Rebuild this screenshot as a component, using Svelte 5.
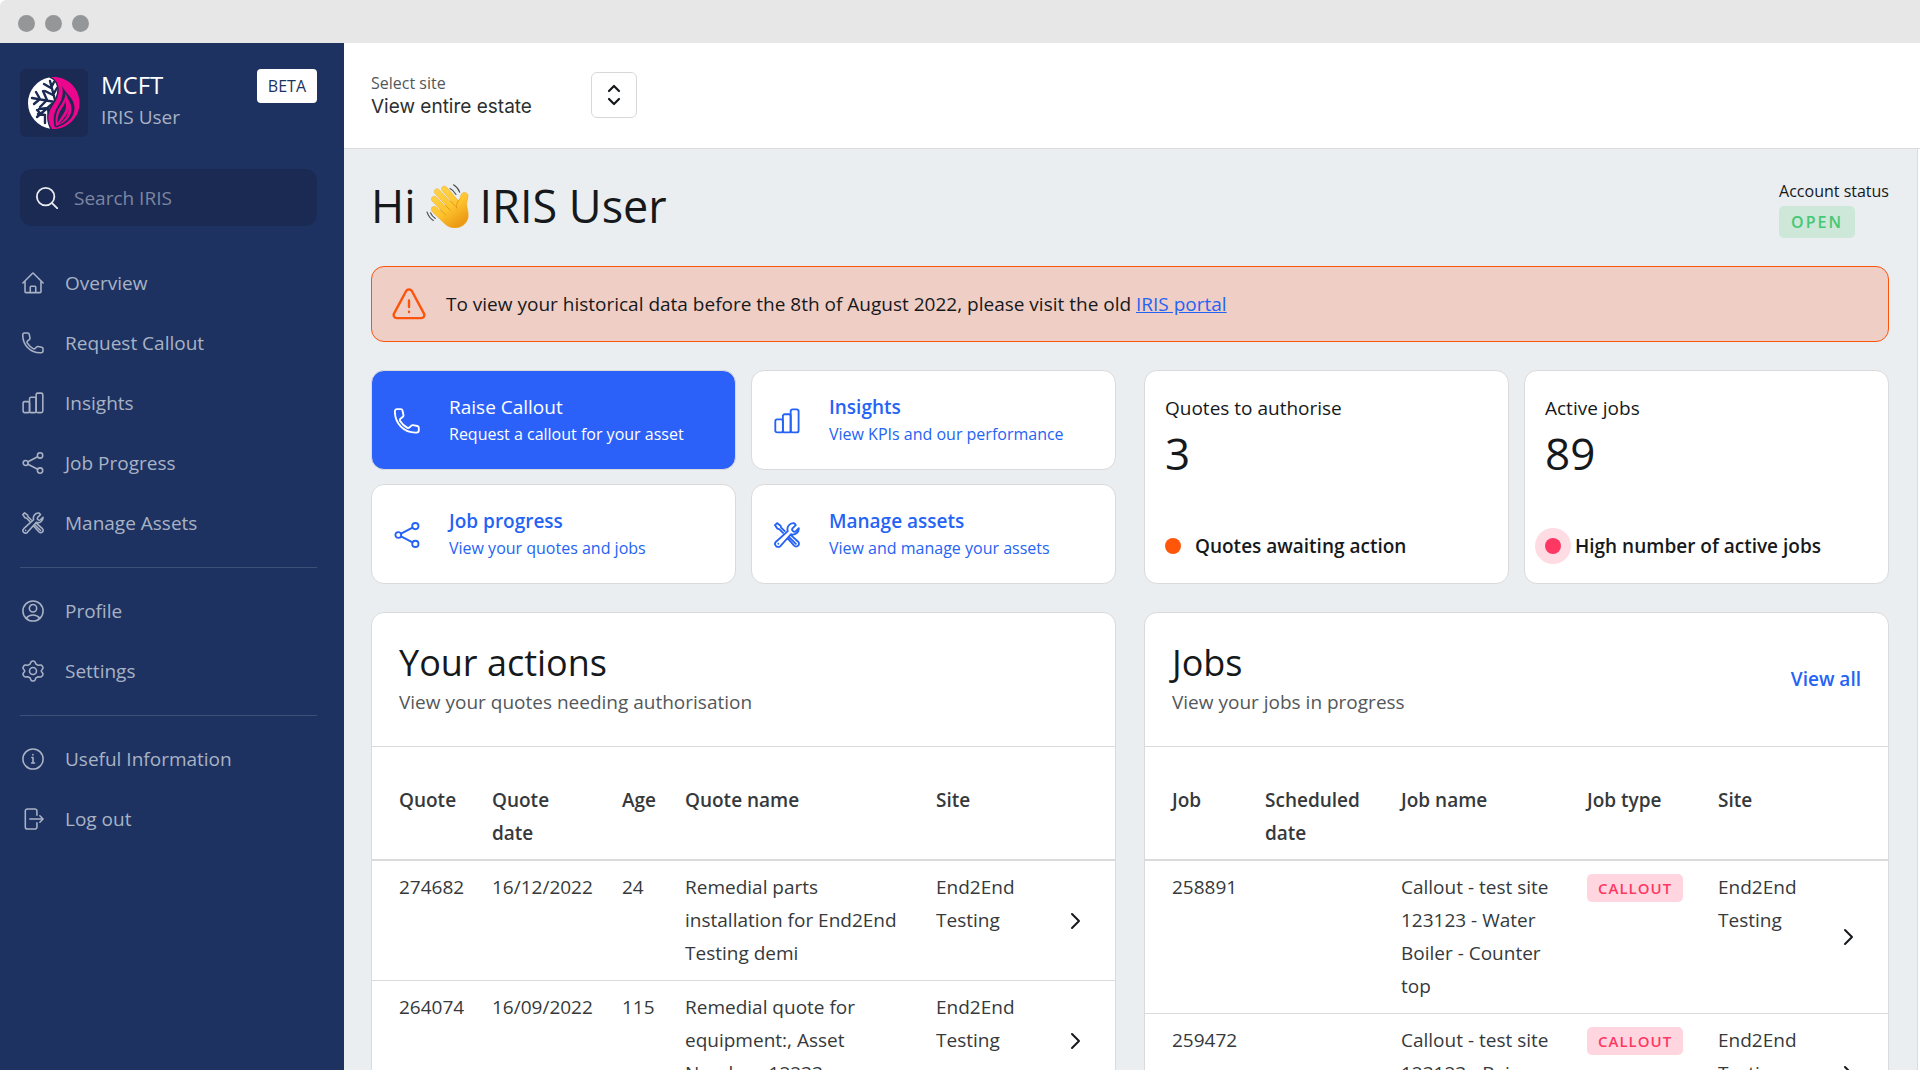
<script lang="ts">
    let search = "";

    const mainLinks = [
        { icon: "home", label: "Overview" },
        { icon: "phone", label: "Request Callout" },
        { icon: "chart", label: "Insights" },
        { icon: "share", label: "Job Progress" },
        { icon: "tools", label: "Manage Assets" }
    ];
    const userLinks = [
        { icon: "profile", label: "Profile" },
        { icon: "settings", label: "Settings" }
    ];
    const infoLinks = [
        { icon: "info", label: "Useful Information" },
        { icon: "logout", label: "Log out" }
    ];
    const navGroups = [mainLinks, userLinks, infoLinks];

    const shortcuts = [
        { icon: "phone", title: "Raise Callout", text: "Request a callout for your asset", primary: true },
        { icon: "chart", title: "Insights", text: "View KPIs and our performance", primary: false },
        { icon: "share", title: "Job progress", text: "View your quotes and jobs", primary: false },
        { icon: "tools", title: "Manage assets", text: "View and manage your assets", primary: false }
    ];

    const stats = [
        { label: "Quotes to authorise", value: 3, note: "Quotes awaiting action", level: "warn" },
        { label: "Active jobs", value: 89, note: "High number of active jobs", level: "alert" }
    ];

    const quotes = [
        { id: 274682, date: "16/12/2022", age: 24, name: "Remedial parts installation for End2End Testing demi", site: "End2End Testing" },
        { id: 264074, date: "16/09/2022", age: 115, name: "Remedial quote for equipment:, Asset Number: 12233", site: "End2End Testing" }
    ];

    const jobs = [
        { id: 258891, date: "", name: "Callout - test site 123123 - Water Boiler - Counter top", type: "Callout", site: "End2End Testing" },
        { id: 259472, date: "", name: "Callout - test site 123123 - Bain Marie", type: "Callout", site: "End2End Testing" }
    ];
</script>

{#snippet icon(name: string)}
    <svg class="icon" viewBox="0 0 24 24" aria-hidden="true">
        {#if name === "home"}
            <path d="M1 12 11.3 1.6a1 1 0 0 1 1.4 0L23 12M3.3 9.8V21.5a1 1 0 0 0 1 1h15.4a1 1 0 0 0 1-1V9.8M9 22.5v-6a1 1 0 0 1 1-1h4a1 1 0 0 1 1 1v6" />
        {:else if name === "phone"}
            <path d="M2.6 1.1h3.6a1.8 1.8 0 0 1 1.7 1.4l.8 4a1.8 1.8 0 0 1-.7 1.8L6.2 9.6a2 2 0 0 0-.4 2.6a18 18 0 0 0 6.3 5.9a2 2 0 0 0 2.5-.4l1.2-1.3a1.9 1.9 0 0 1 1.7-.6l4.1.8a1.7 1.7 0 0 1 1.3 1.7v2.2a2.2 2.2 0 0 1-2.2 2.2C9 23.2.8 14 .8 3.3a2 2 0 0 1 1.8-2.2Z" />
        {:else if name === "chart"}
            <rect x="1.2" y="10.5" width="7" height="12" rx="1.6" />
            <rect x="8.2" y="5.8" width="7.2" height="16.7" rx="1.6" />
            <rect x="15.4" y="1.2" width="7.3" height="21.3" rx="1.8" />
        {:else if name === "share"}
            <circle cx="4" cy="12" r="2.7" />
            <circle cx="19.7" cy="3.8" r="2.9" />
            <circle cx="19.7" cy="20.2" r="2.9" />
            <path d="m6.5 10.7 10.6-5.5M6.5 13.3l10.6 5.5" />
        {:else if name === "tools"}
            <path d="m9.9 8.4-3.3-3.2-.5-1.8L2.8 1 .9 2.9l2.3 3.3 1.9.6 3.2 3.3M14.4 14.4l5.8 5.8M12.6 15.2l6 6.7a2.6 2.6 0 0 0 3.7 0 2.6 2.6 0 0 0 0-3.7l-6.7-6.1M18.3 1.1a5.5 5.5 0 0 0-5.6 7.3L1.9 18.2a2.8 2.8 0 1 0 4 4l9.7-10.9a5.5 5.5 0 0 0 7.3-5.6l-2.7 2.7a2 2 0 0 1-2.7 0 2 2 0 0 1-.2-2.8l2.8-2.7a4 4 0 0 0-1.8-1.8ZM4 20v.1" />
        {:else if name === "profile"}
            <circle cx="12" cy="12" r="11" />
            <circle cx="12" cy="9" r="4" />
            <path d="M4.5 20a9.6 9.6 0 0 1 15 0" />
        {:else if name === "settings"}
            <circle cx="12" cy="12" r="3.8" />
            <path d="m14.3 2.3.8 2.1 2.6 1.4 2.2-.3a2.2 2.2 0 0 1 2.2 1.1l.5.9a2.2 2.2 0 0 1-.2 2.4l-1.3 1.7v.8l1.3 1.7a2.2 2.2 0 0 1 .2 2.4l-.5.9a2.2 2.2 0 0 1-2.2 1.1l-2.2-.3-2.6 1.4-.8 2.1a2.2 2.2 0 0 1-2 1.3h-.6a2.2 2.2 0 0 1-2-1.3l-.8-2.1-2.6-1.4-2.2.3a2.2 2.2 0 0 1-2.2-1.1l-.5-.9a2.2 2.2 0 0 1 .2-2.4l1.3-1.7v-.8L1.6 9.9a2.2 2.2 0 0 1-.2-2.4l.5-.9a2.2 2.2 0 0 1 2.2-1.1l2.2.3 2.6-1.4.8-2.1a2.2 2.2 0 0 1 2-1.3h.6a2.2 2.2 0 0 1 2 1.3Z" />
        {:else if name === "info"}
            <circle cx="12" cy="12" r="11" />
            <path d="M10.8 10.4H12v5.8M10.5 16.3h3.2M11.9 7.2v.3" />
        {:else if name === "logout"}
            <path d="M16.3 8V3.3A2.3 2.3 0 0 0 14 1H5.9a2.3 2.3 0 0 0-2.3 2.3v17.4A2.3 2.3 0 0 0 5.9 23H14a2.3 2.3 0 0 0 2.3-2.3V16M8.5 12H23M19.5 8.5 23 12l-3.5 3.5" />
        {/if}
    </svg>
{/snippet}

{#snippet chevron()}
    <svg class="chevron" viewBox="0 0 12 18" aria-hidden="true"><path d="m2 2 7 7-7 7" /></svg>
{/snippet}

<div class="window">
    <div class="titlebar">
        <span class="light"></span>
        <span class="light"></span>
        <span class="light"></span>
    </div>

    <div class="app">
        <aside class="sidebar">
            <div class="brand">
                <div class="logo">
                    <svg viewBox="0 0 52 52" aria-hidden="true">
                        <path class="ice" d="M21 .5A26 26 0 0 0 22 51.7C18 44 18 36 23 28C28 21 30 16 29 10C28 5 25 2 21 .5Z" />
                        <g class="flake">
                            <path d="M27 25 4 21M8 15l4 7-6 5M15 14l4 9-7 7" />
                            <path d="M27 23 22 4M16 7l7 4 3-6M17 14l8 4 4-7" />
                            <path d="M24 27 9 40M9 33l4 4M17 46v-8l-7-1M21 40l-1-9-9 1" />
                        </g>
                        <path class="fire" d="M23 0A26 26 0 0 1 28 52L24 52C19 44 19 37 24.5 29C29.5 22 31.5 16 30.5 10C29.5 5 27 2 23 0Z" />
                        <path class="gap" d="M34 9C37 16 46.5 21 46.5 31C46.5 41 38 48 28 50.5L26.5 49.5C25.5 43 25 38 28.5 31.5C32 25.5 36.5 19 34 9Z" />
                        <path class="fire" d="M37.5 15C38 22 33 27 30 32.5C27 38.5 27.5 44 28 49C37 46 43.5 40 43.5 32C43.5 25 38.5 21 37.5 15Z" />
                        <path class="gap" d="M37 23.5C37.5 28 32.5 32 30.8 37C29.5 41 29.5 44 29.5 46.5C31.5 42.5 34 39 36 36C38.5 32 38.5 28 37 23.5Z" />
                        <path class="gap" d="M40.5 29C41.5 36 35.5 41 31 47C37 43 41.5 37 40.5 29Z" />
                    </svg>
                </div>
                <div class="brand-text">
                    <strong>MCFT</strong>
                    <span>IRIS User</span>
                </div>
                <span class="beta">BETA</span>
            </div>

            <label class="search">
                <svg viewBox="0 0 24 24" aria-hidden="true"><circle cx="10.5" cy="10.5" r="9.5" /><path d="m17.5 17.5 6 6" /></svg>
                <input type="search" aria-label="Search IRIS" placeholder="Search IRIS" bind:value={search} />
            </label>

            <nav>
                {#each navGroups as group}
                    <ul>
                        {#each group as link (link.label)}
                            <li><a href="#top">{@render icon(link.icon)}{link.label}</a></li>
                        {/each}
                    </ul>
                {/each}
            </nav>
        </aside>

        <div class="content">
            <header class="topbar">
                <div class="site">
                    <span id="site-label">Select site</span>
                    <span class="site-name">View entire estate</span>
                </div>
                <button class="site-toggle" aria-labelledby="site-label">
                    <svg viewBox="0 0 14 22" aria-hidden="true"><path d="m2 7 5-5 5 5M2 15l5 5 5-5" /></svg>
                </button>
            </header>

            <main>
                <div class="greeting">
                    <h1>
                        Hi
                        <svg class="wave" viewBox="0 0 44 44" role="img" aria-label="waving hand">
                            <defs>
                                <linearGradient id="skin" x1="0" y1="0" x2="0.6" y2="1">
                                    <stop offset="0" stop-color="#ffd84d" />
                                    <stop offset="0.6" stop-color="#fec52e" />
                                    <stop offset="1" stop-color="#ec9a14" />
                                </linearGradient>
                            </defs>
                            <path
                                class="palm"
                                d="M6 23.5c1-1.5 3-1.6 4.4-.3l4 3.5.7-.7-8.6-8.6c-1.3-1.4-1.3-3.2-.2-4.3 1.2-1.1 3-1 4.3.3l8.3 8.3.8-.7L9.2 9.8C8 8.4 8 6.5 9.2 5.4c1.2-1 3-.8 4.2.5l10.8 11.6.8-.7-8.6-10c-1.1-1.4-1-3.2.2-4.1 1.2-1 2.9-.7 4.1.6l10.6 12.2c1 1.1 2.2 1 2.5-.3.3-1.6.8-3.6 1.7-5 .9-1.5 2.4-2 4-1.5 1.6.5 2.8 1.7 2.5 3.7-.3 2-1.2 5-1.3 8.1 0 3.4 1.9 6.8 1.5 12-.5 6.5-6.5 11.5-13.5 11.5-4.5 0-8-2.3-10.7-5L6.6 28c-1.5-1.5-1.6-3.2-.6-4.5Z"
                            />
                            <path class="crease" d="m14.7 26.2 5 4.7M19.6 21.5l4.8 4.8M24.6 17.1l4.8 5.2M33.5 15.5c-2.5 2.5-3.5 5-3 8.5" />
                            <path class="motion" d="M24 4.5c2.5 1.2 4.5 3.2 6 6M27.5.8c2.8 1.6 5 4.2 6.2 7.5M1 28c1.2 3.5 3.3 6.5 6.3 8.5M4.5 28.8c1 2.4 2.5 4.2 4.8 5.7" />
                        </svg>
                        IRIS User
                    </h1>
                    <div class="status">
                        <span>Account status</span>
                        <span class="status-tag">OPEN</span>
                    </div>
                </div>

                <div class="notice">
                    <svg viewBox="0 0 34 32" aria-hidden="true">
                        <path d="M14 3.3a3.4 3.4 0 0 1 6 0l12 22.3a3.1 3.1 0 0 1-2.7 4.5H4.7A3.1 3.1 0 0 1 2 25.6ZM17 12.5v6.5M17 23.7v.3" />
                    </svg>
                    <p>To view your historical data before the 8th of August 2022, please visit the old <a href="#portal">IRIS portal</a></p>
                </div>

                <div class="columns">
                    <div class="shortcuts">
                        {#each shortcuts as item (item.title)}
                            <a class="card shortcut" class:primary={item.primary} href="#top">
                                {@render icon(item.icon)}
                                <span class="shortcut-text">
                                    <span class="shortcut-title">{item.title}</span>
                                    <span class="shortcut-sub">{item.text}</span>
                                </span>
                            </a>
                        {/each}
                    </div>

                    <div class="stats">
                        {#each stats as stat (stat.label)}
                            <div class="card stat">
                                <span>{stat.label}</span>
                                <span class="stat-value">{stat.value}</span>
                                <span class="stat-note"><i class="dot {stat.level}"></i>{stat.note}</span>
                            </div>
                        {/each}
                    </div>

                    <section class="card panel">
                        <div class="panel-head">
                            <div>
                                <h2>Your actions</h2>
                                <p>View your quotes needing authorisation</p>
                            </div>
                        </div>
                        <table class="quotes">
                            <thead>
                                <tr>
                                    <th>Quote</th>
                                    <th>Quote date</th>
                                    <th>Age</th>
                                    <th>Quote name</th>
                                    <th>Site</th>
                                    <th></th>
                                </tr>
                            </thead>
                            <tbody>
                                {#each quotes as quote (quote.id)}
                                    <tr>
                                        <td>{quote.id}</td>
                                        <td>{quote.date}</td>
                                        <td>{quote.age}</td>
                                        <td>{quote.name}</td>
                                        <td>{quote.site}</td>
                                        <td class="go">{@render chevron()}</td>
                                    </tr>
                                {/each}
                            </tbody>
                        </table>
                    </section>

                    <section class="card panel">
                        <div class="panel-head">
                            <div>
                                <h2>Jobs</h2>
                                <p>View your jobs in progress</p>
                            </div>
                            <a href="#jobs">View all</a>
                        </div>
                        <table class="jobs">
                            <thead>
                                <tr>
                                    <th>Job</th>
                                    <th>Scheduled date</th>
                                    <th>Job name</th>
                                    <th>Job type</th>
                                    <th>Site</th>
                                    <th></th>
                                </tr>
                            </thead>
                            <tbody>
                                {#each jobs as job (job.id)}
                                    <tr>
                                        <td>{job.id}</td>
                                        <td>{job.date}</td>
                                        <td>{job.name}</td>
                                        <td><span class="tag">{job.type}</span></td>
                                        <td>{job.site}</td>
                                        <td class="go">{@render chevron()}</td>
                                    </tr>
                                {/each}
                            </tbody>
                        </table>
                    </section>
                </div>
            </main>
        </div>
    </div>
</div>

<style>
    :global(body) {
        margin: 0;
    }

    * {
        box-sizing: border-box;
    }

    .window {
        height: 100vh;
        display: flex;
        flex-direction: column;
        overflow: hidden;
        font-family: "Open Sans", "Noto Sans", sans-serif;
        font-size: 19px;
        line-height: 26px;
        color: #16191c;
        background: #ffffff;
    }

    h1,
    h2,
    p,
    ul {
        margin: 0;
        padding: 0;
        font-weight: 400;
        list-style: none;
    }

    a {
        color: #2563f5;
        text-decoration: none;
    }

    svg {
        flex: none;
        fill: none;
        stroke: currentColor;
        stroke-linecap: round;
        stroke-linejoin: round;
    }

    .titlebar {
        flex: none;
        height: 43px;
        padding: 3px 0 0 18px;
        display: flex;
        align-items: center;
        gap: 10px;
        background: #e7e7e7;
        border-top-left-radius: 6px;
    }
    .light {
        width: 17px;
        height: 17px;
        border-radius: 50%;
        background: #959698;
    }

    .app {
        flex: 1;
        min-height: 0;
        display: flex;
    }

    /* sidebar */
    .sidebar {
        flex: none;
        width: 344px;
        padding: 26px 27px 0 20px;
        background: #1d3260;
        color: #a9b2c5;
    }
    .brand {
        display: flex;
        align-items: flex-start;
    }
    .logo {
        width: 68px;
        height: 68px;
        padding: 8px;
        border-radius: 6px;
        background: #1b2a52;
    }
    .logo svg {
        display: block;
        width: 52px;
        height: 52px;
        stroke: none;
    }
    .ice {
        fill: #ffffff;
    }
    .flake {
        fill: none;
        stroke: #1b2a52;
        stroke-width: 2.4;
    }
    .fire {
        fill: #ec068d;
    }
    .gap {
        fill: #1b2a52;
    }
    .brand-text {
        flex: 1;
        padding-left: 13px;
        display: flex;
        flex-direction: column;
        line-height: 32px;
    }
    .brand-text strong {
        font-size: 24px;
        font-weight: 400;
        color: #ffffff;
    }
    .beta {
        padding: 4px 11px;
        border-radius: 4px;
        background: #ffffff;
        color: #1d3260;
        font-size: 16px;
    }
    .search {
        height: 57px;
        margin-top: 32px;
        padding: 0 16px;
        display: flex;
        align-items: center;
        gap: 16px;
        border-radius: 12px;
        background: #1b2a52;
    }
    .search svg {
        width: 22px;
        height: 22px;
        color: #e8ebf1;
        stroke-width: 2;
    }
    .search input {
        flex: 1;
        min-width: 0;
        padding: 0;
        border: none;
        outline: none;
        background: none;
        color: #ffffff;
        font: inherit;
    }
    .search input::placeholder {
        color: #7c86a1;
        opacity: 1;
    }
    nav {
        margin-top: 27px;
    }
    nav ul + ul {
        margin-top: 14px;
        padding-top: 13px;
        border-top: 1px solid #3f5078;
    }
    nav a {
        height: 60px;
        padding-left: 2px;
        display: flex;
        align-items: center;
        gap: 21px;
        color: #a9b2c5;
    }
    .icon {
        width: 22px;
        height: 22px;
        stroke-width: 1.7;
    }

    /* page */
    .content {
        flex: 1;
        min-width: 0;
        display: flex;
        flex-direction: column;
    }
    .topbar {
        flex: none;
        height: 106px;
        padding: 0 27px 2px;
        display: flex;
        align-items: center;
        gap: 59px;
        border-bottom: 1px solid #dcdcdc;
        background: #ffffff;
    }
    .site {
        display: flex;
        flex-direction: column;
        font-size: 16px;
        line-height: 24px;
        color: #54575a;
    }
    .site-name {
        font-family: Inter, sans-serif;
        font-size: 19px;
        color: #2c2f31;
    }
    .site-toggle {
        width: 46px;
        height: 46px;
        padding: 0;
        display: flex;
        align-items: center;
        justify-content: center;
        border: 1px solid #d8d8d8;
        border-radius: 6px;
        background: #ffffff;
        color: #16191c;
    }
    .site-toggle svg {
        width: 14px;
        height: 22px;
        stroke-width: 2.2;
    }

    main {
        flex: 1;
        min-height: 0;
        margin-right: 2px;
        padding: 28px 28px 0 27px;
        overflow: hidden;
        border-right: 1px solid #dcdcdc;
        background: #eaeef1;
    }
    .greeting {
        height: 89px;
        display: flex;
        justify-content: space-between;
        align-items: flex-start;
    }
    h1 {
        display: flex;
        align-items: center;
        gap: 10px;
        font-size: 45px;
        line-height: 58px;
    }
    .wave {
        width: 44px;
        height: 44px;
    }
    .palm {
        fill: url(#skin);
        stroke: #eda21a;
        stroke-width: 0.5;
    }
    .crease {
        stroke: #e29a1d;
        stroke-width: 1;
    }
    .motion {
        stroke: #4b5054;
        stroke-width: 1.1;
    }
    .status {
        display: flex;
        flex-direction: column;
        align-items: flex-start;
        gap: 2px;
        padding-top: 1px;
        font-size: 16px;
    }
    .status-tag {
        padding: 3px 12px;
        border-radius: 5px;
        background: #cde7d8;
        color: #45c875;
        font-weight: 600;
        line-height: 26px;
        letter-spacing: 2px;
    }

    .notice {
        height: 76px;
        padding: 0 20px;
        display: flex;
        align-items: center;
        gap: 20px;
        border: 1px solid #fd540c;
        border-radius: 13px;
        background: #efcec5;
    }
    .notice svg {
        width: 34px;
        height: 32px;
        color: #fd540c;
        stroke-width: 2.4;
    }
    .notice a {
        text-decoration: underline;
    }

    .columns {
        margin-top: 28px;
        display: grid;
        grid-template-columns: minmax(0, 1fr) minmax(0, 1fr);
        gap: 28px;
        align-items: start;
    }
    .shortcuts,
    .stats {
        height: 214px;
        display: grid;
        grid-template-columns: 1fr 1fr;
        gap: 14px 15px;
    }
    .card {
        border: 1px solid #dadada;
        border-radius: 13px;
        background: #ffffff;
    }
    .shortcut {
        padding: 1px 22px 0;
        display: flex;
        align-items: center;
        gap: 29px;
    }
    .shortcut .icon {
        width: 26px;
        height: 26px;
    }
    .shortcut.primary {
        background: #2b61f9;
        color: #ffffff;
    }
    .shortcut-text {
        display: flex;
        flex-direction: column;
    }
    .shortcut-title {
        font-weight: 600;
    }
    .primary .shortcut-title {
        font-weight: 400;
    }
    .shortcut-sub {
        font-size: 16px;
        line-height: 28px;
    }
    .stat {
        padding: 24px 20px;
        display: flex;
        flex-direction: column;
    }
    .stat-value {
        font-size: 44px;
        line-height: 64px;
    }
    .stat-note {
        margin-top: auto;
        display: flex;
        align-items: center;
        gap: 14px;
        font-weight: 600;
    }
    .dot {
        width: 16px;
        height: 16px;
        border-radius: 50%;
    }
    .dot.warn {
        background: #ff560a;
    }
    .dot.alert {
        background: #fe3763;
        box-shadow: 0 0 0 10px #ffdbe3;
    }

    .panel {
        overflow: hidden;
    }
    .panel-head {
        height: 134px;
        padding: 0 27px 2px;
        display: flex;
        align-items: center;
        justify-content: space-between;
        border-bottom: 1px solid #dadada;
    }
    .panel-head p {
        padding-bottom: 6px;
        color: #54575a;
    }
    .panel-head a {
        font-weight: 600;
    }
    h2 {
        font-size: 36px;
        line-height: 52px;
    }

    table {
        width: 100%;
        border-collapse: collapse;
        table-layout: fixed;
        line-height: 33px;
        color: #36393b;
    }
    th,
    td {
        padding: 10px 8px 10px 27px;
        text-align: left;
        vertical-align: top;
        font-weight: 400;
        border-bottom: 1px solid #dadada;
    }
    th {
        padding-top: 37px;
        padding-bottom: 9px;
        font-weight: 600;
        border-bottom: 2px solid #dadada;
    }
    .quotes th:nth-child(1),
    .jobs th:nth-child(1) {
        width: 93px;
    }
    .quotes th:nth-child(2) {
        width: 130px;
    }
    .quotes th:nth-child(3) {
        width: 63px;
    }
    .quotes th:nth-child(5) {
        width: 134px;
    }
    .quotes th:nth-child(3),
    .quotes td:nth-child(2),
    .quotes td:nth-child(3),
    .jobs th:nth-child(2) {
        padding-right: 0;
    }
    .jobs th:nth-child(2) {
        width: 136px;
    }
    .jobs th:nth-child(4) {
        width: 131px;
    }
    .jobs th:nth-child(5) {
        width: 125px;
    }
    .quotes th:nth-child(6),
    .jobs th:nth-child(6) {
        width: 72px;
    }
    td.go {
        vertical-align: middle;
    }
    .chevron {
        width: 12px;
        height: 18px;
        display: block;
        color: #16191c;
        stroke-width: 2;
    }
    .tag {
        display: inline-block;
        padding: 0 11px;
        border-radius: 5px;
        background: #ffd6df;
        color: #fe3763;
        font-size: 15px;
        font-weight: 600;
        line-height: 28px;
        letter-spacing: 1px;
        text-transform: uppercase;
    }
</style>
